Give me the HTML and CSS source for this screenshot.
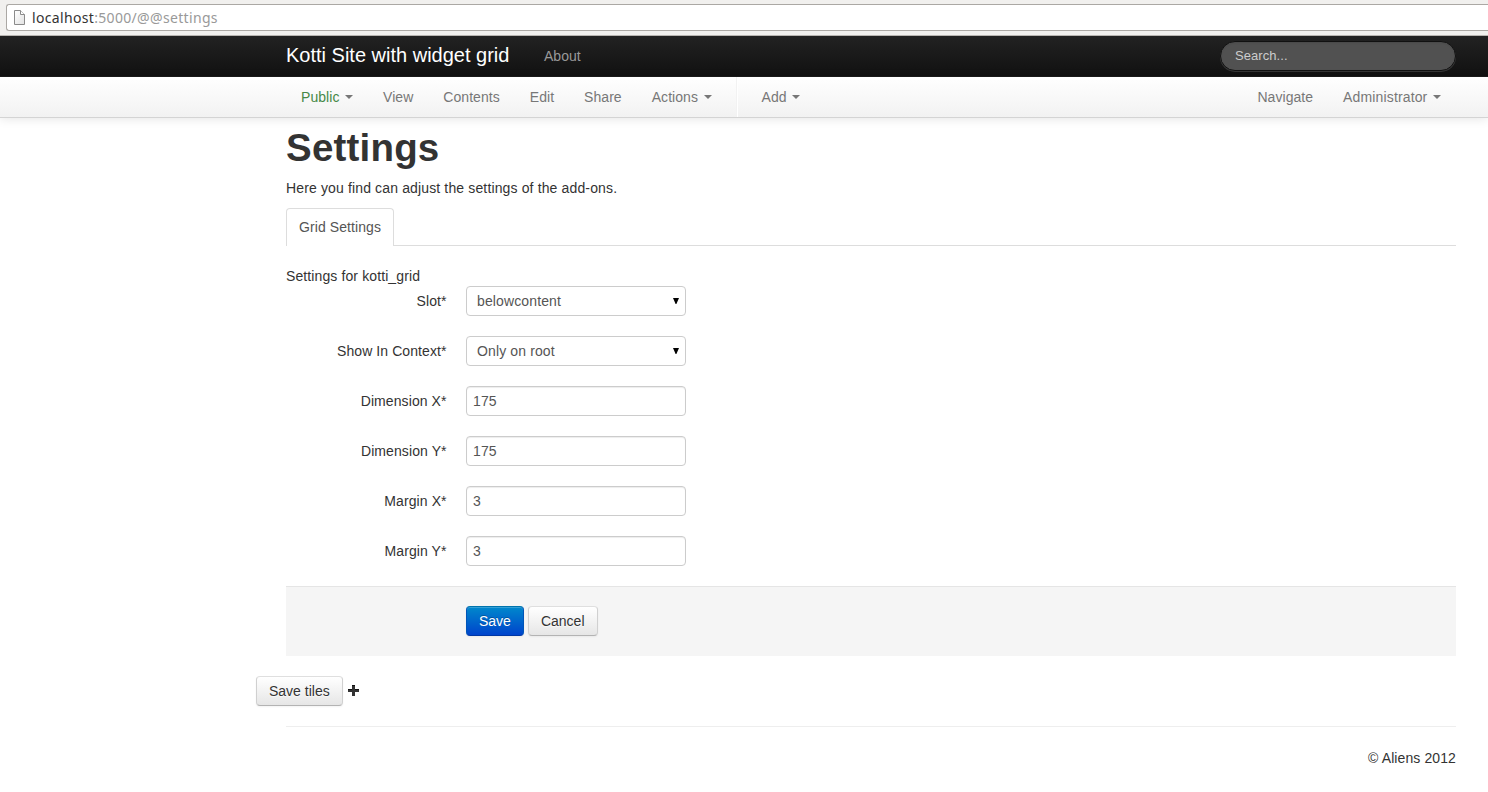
FILE: index.html
```html
<!DOCTYPE html>
<html lang="en">
<head>
<meta charset="utf-8">
<title>Settings - Kotti Site with widget grid</title>
<link rel="stylesheet" href="styles.css">
</head>
<body>
<div class="browser-bar">
  <div class="address">
    <svg class="page-icon" width="13" height="16" viewBox="0 0 13 16">
      <defs><linearGradient id="paper" x1="0" y1="0" x2="1" y2="1"><stop offset="0" stop-color="#fff"/><stop offset="1" stop-color="#e2e2e2"/></linearGradient></defs>
      <path d="M1.5.5h6l4 4v10h-10z" fill="url(#paper)" stroke="#8a8a8a"/>
      <path d="M7.5.5v4h4" fill="#fff" stroke="#8a8a8a"/>
    </svg>
    <span class="url"><span class="host">localhost</span>:5000/@@settings</span>
  </div>
</div>
<header class="navbar dark">
  <div class="container">
    <a class="brand">Kotti Site with widget grid</a>
    <a class="nav-link about">About</a>
    <input class="search" type="text" placeholder="Search...">
  </div>
</header>
<nav class="navbar light">
  <div class="container">
    <a class="nav-link public">Public<b class="caret"></b></a>
    <a class="nav-link">View</a>
    <a class="nav-link">Contents</a>
    <a class="nav-link">Edit</a>
    <a class="nav-link">Share</a>
    <a class="nav-link">Actions<b class="caret"></b></a>
    <span class="divider"></span>
    <a class="nav-link">Add<b class="caret"></b></a>
    <a class="nav-link first-right">Navigate</a>
    <a class="nav-link wide">Administrator<b class="caret"></b></a>
  </div>
</nav>
<main class="container content">
  <h1>Settings</h1>
  <p class="lead">Here you find can adjust the settings of the add-ons.</p>
  <div class="tabs"><a class="tab">Grid Settings</a></div>
  <form>
    <p class="description">Settings for kotti_grid</p>
    <div class="group"><label>Slot*</label><div class="field select">belowcontent<svg class="arrow" width="6" height="6" viewBox="0 0 6 6"><path d="M0 0h6L3.4 6h-.8z"/></svg></div></div>
    <div class="group"><label>Show In Context*</label><div class="field select">Only on root<svg class="arrow" width="6" height="6" viewBox="0 0 6 6"><path d="M0 0h6L3.4 6h-.8z"/></svg></div></div>
    <div class="group"><label>Dimension X*</label><input class="field text" type="text" value="175"></div>
    <div class="group"><label>Dimension Y*</label><input class="field text" type="text" value="175"></div>
    <div class="group"><label>Margin X*</label><input class="field text" type="text" value="3"></div>
    <div class="group"><label>Margin Y*</label><input class="field text" type="text" value="3"></div>
    <div class="actions">
      <button type="button" class="btn primary">Save</button>
      <button type="button" class="btn">Cancel</button>
    </div>
  </form>
  <div class="tiles">
    <button type="button" class="btn">Save tiles</button>
    <svg class="plus" width="11" height="11" viewBox="0 0 11 11"><path d="M4 0h3v4h4v3H7v4H4V7H0V4h4z" fill="#333"/><path d="M4 0h3v1H4zM0 4h4v1H0zM7 4h4v1H7z" fill="#111"/></svg>
  </div>
  <footer>© Aliens 2012</footer>
</main>
</body>
</html>
```
FILE: styles.css
```css
* { box-sizing: border-box; }
body {
  margin: 0;
  height: 792px;
  overflow: hidden;
  background: #fff;
  color: #333;
  font: 14px/20px "Liberation Sans", Arial, sans-serif;
}
.browser-bar {
  height: 36px;
  padding: 4px 0 0 6px;
  background: #f1f0ee;
  border-bottom: 1px solid #b8b5b1;
}
.address {
  display: flex;
  align-items: center;
  height: 27px;
  padding-left: 6px;
  background: #fff;
  border: 1px solid #aba8a4;
  border-right: 0;
  border-radius: 3px 0 0 3px;
}
.page-icon {
  flex: none;
  margin: 1px 6px 0 0;
}
.url {
  color: #999;
  font: 14px/20px "Noto Sans", sans-serif;
  letter-spacing: .33px;
  white-space: nowrap;
}
.host { color: #333; }
.container {
  width: 1170px;
  margin-left: 286px;
}
.navbar { height: 41px; }
.navbar .container {
  display: flex;
  align-items: center;
  height: 40px;
}
.dark {
  background: linear-gradient(#222, #111);
  border-bottom: 1px solid #1b1b1b;
}
.brand {
  margin-top: -2px;
  color: #fff;
  font-size: 20px;
}
.nav-link {
  display: flex;
  align-items: center;
  padding: 0 15px;
  color: #777;
  letter-spacing: .05px;
  white-space: nowrap;
}
.about {
  margin-left: 19.5px;
  color: #999;
}
.search {
  width: 236px;
  height: 30px;
  margin-left: auto;
  padding: 0 14px 1px;
  background: #515151;
  border: 1px solid #111;
  border-radius: 15px;
  box-shadow: inset 0 1px 2px rgba(0,0,0,.1), 0 1px 0 rgba(255,255,255,.15);
  color: #fff;
  font: 13px/18px "Liberation Sans", Arial, sans-serif;
  letter-spacing: .06px;
}
.search::placeholder { color: #ccc; }
.light {
  background: linear-gradient(#fff, #f2f2f2);
  border-bottom: 1px solid #d4d4d4;
  box-shadow: 0 1px 10px rgba(0,0,0,.1);
}
.public { color: #468847; }
.caret {
  margin-left: 5.6px;
  border: 4px solid transparent;
  border-top-color: #777;
  border-bottom: 0;
}
.divider {
  width: 2px;
  height: 40px;
  margin: 0 9px;
  background: #f2f2f2;
  border-right: 1px solid #fff;
}
.first-right { margin-left: auto; }
.wide { letter-spacing: .14px; }
.content { padding-top: 10px; }
h1 {
  margin: 0 0 10px;
  font-size: 38.5px;
  letter-spacing: .2px;
  line-height: 40px;
}
p { margin: 0; }
.lead {
  margin-bottom: 10px;
  letter-spacing: .14px;
}
.description { letter-spacing: .11px; }
.tabs {
  display: flex;
  height: 38px;
  margin-bottom: 20px;
  border-bottom: 1px solid #ddd;
}
.tab {
  height: 38px;
  padding: 8px 12px;
  background: #fff;
  border: 1px solid #ddd;
  border-bottom: 0;
  border-radius: 4px 4px 0 0;
  color: #555;
  letter-spacing: .08px;
}
.group {
  display: flex;
  align-items: center;
  height: 30px;
  margin-bottom: 20px;
}
.group label {
  width: 160.6px;
  margin-right: 19.4px;
  letter-spacing: .09px;
  text-align: right;
}
.field {
  width: 220px;
  height: 30px;
  padding: 4px 6px;
  background: #fff;
  border: 1px solid #ccc;
  border-radius: 4px;
  color: #555;
  font: 14px/20px "Liberation Sans", Arial, sans-serif;
  letter-spacing: .13px;
}
.text { box-shadow: inset 0 1px 1px rgba(0,0,0,.075); }
.select {
  display: flex;
  align-items: center;
  justify-content: space-between;
  padding-left: 10px;
}
.actions {
  display: flex;
  gap: 4px;
  height: 70px;
  padding: 19px 0 0 180px;
  background: #f5f5f5;
  border-top: 1px solid #e5e5e5;
}
.btn {
  height: 30px;
  padding: 4px 12px;
  background: linear-gradient(#fff, #e6e6e6);
  border: 1px solid #d5d5d5;
  border-color: #dfdfdf #d0d0d0 #b3b3b3;
  border-radius: 4px;
  box-shadow: inset 0 1px 0 rgba(255,255,255,.2), 0 1px 2px rgba(0,0,0,.05);
  color: #333;
  font: 14px/20px "Liberation Sans", Arial, sans-serif;
  text-shadow: 0 1px 1px rgba(255,255,255,.75);
}
.primary {
  background: linear-gradient(#08c, #04c);
  border-color: #0074ad #0055b8 #0037a4;
  color: #fff;
  text-shadow: 0 -1px 0 rgba(0,0,0,.25);
}
.tiles {
  display: flex;
  align-items: center;
  gap: 5px;
  margin: 20px 0 20px -30px;
}
.plus { margin-bottom: 1px; }
footer {
  padding-top: 21px;
  border-top: 1px solid #eee;
  letter-spacing: .1px;
  text-align: right;
}
```
